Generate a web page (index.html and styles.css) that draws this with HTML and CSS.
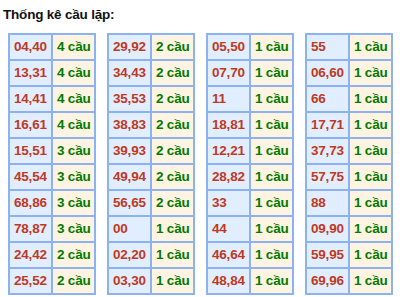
FILE: index.html
```html
<!DOCTYPE html>
<html lang="vi">
<head>
<meta charset="utf-8">
<title>Thống kê cầu lặp</title>
<link rel="stylesheet" href="styles.css">
</head>
<body>
<div class="page">
  <h2 class="title">Thống kê cầu lặp:</h2>
  <div class="tables">
    <table class="cau">
      <tr><td class="num">04,40</td><td class="cnt">4 cầu</td></tr>
      <tr><td class="num">13,31</td><td class="cnt">4 cầu</td></tr>
      <tr><td class="num">14,41</td><td class="cnt">4 cầu</td></tr>
      <tr><td class="num">16,61</td><td class="cnt">4 cầu</td></tr>
      <tr><td class="num">15,51</td><td class="cnt">3 cầu</td></tr>
      <tr><td class="num">45,54</td><td class="cnt">3 cầu</td></tr>
      <tr><td class="num">68,86</td><td class="cnt">3 cầu</td></tr>
      <tr><td class="num">78,87</td><td class="cnt">3 cầu</td></tr>
      <tr><td class="num">24,42</td><td class="cnt">2 cầu</td></tr>
      <tr><td class="num">25,52</td><td class="cnt">2 cầu</td></tr>
    </table>
    <table class="cau">
      <tr><td class="num">29,92</td><td class="cnt">2 cầu</td></tr>
      <tr><td class="num">34,43</td><td class="cnt">2 cầu</td></tr>
      <tr><td class="num">35,53</td><td class="cnt">2 cầu</td></tr>
      <tr><td class="num">38,83</td><td class="cnt">2 cầu</td></tr>
      <tr><td class="num">39,93</td><td class="cnt">2 cầu</td></tr>
      <tr><td class="num">49,94</td><td class="cnt">2 cầu</td></tr>
      <tr><td class="num">56,65</td><td class="cnt">2 cầu</td></tr>
      <tr><td class="num">00</td><td class="cnt">1 cầu</td></tr>
      <tr><td class="num">02,20</td><td class="cnt">1 cầu</td></tr>
      <tr><td class="num">03,30</td><td class="cnt">1 cầu</td></tr>
    </table>
    <table class="cau">
      <tr><td class="num">05,50</td><td class="cnt">1 cầu</td></tr>
      <tr><td class="num">07,70</td><td class="cnt">1 cầu</td></tr>
      <tr><td class="num">11</td><td class="cnt">1 cầu</td></tr>
      <tr><td class="num">18,81</td><td class="cnt">1 cầu</td></tr>
      <tr><td class="num">12,21</td><td class="cnt">1 cầu</td></tr>
      <tr><td class="num">28,82</td><td class="cnt">1 cầu</td></tr>
      <tr><td class="num">33</td><td class="cnt">1 cầu</td></tr>
      <tr><td class="num">44</td><td class="cnt">1 cầu</td></tr>
      <tr><td class="num">46,64</td><td class="cnt">1 cầu</td></tr>
      <tr><td class="num">48,84</td><td class="cnt">1 cầu</td></tr>
    </table>
    <table class="cau">
      <tr><td class="num">55</td><td class="cnt">1 cầu</td></tr>
      <tr><td class="num">06,60</td><td class="cnt">1 cầu</td></tr>
      <tr><td class="num">66</td><td class="cnt">1 cầu</td></tr>
      <tr><td class="num">17,71</td><td class="cnt">1 cầu</td></tr>
      <tr><td class="num">37,73</td><td class="cnt">1 cầu</td></tr>
      <tr><td class="num">57,75</td><td class="cnt">1 cầu</td></tr>
      <tr><td class="num">88</td><td class="cnt">1 cầu</td></tr>
      <tr><td class="num">09,90</td><td class="cnt">1 cầu</td></tr>
      <tr><td class="num">59,95</td><td class="cnt">1 cầu</td></tr>
      <tr><td class="num">69,96</td><td class="cnt">1 cầu</td></tr>
    </table>
  </div>
</div>
</body>
</html>
```

FILE: styles.css
```css
html, body {
  margin: 0;
  padding: 0;
  background: #ffffff;
}

.page {
  padding: 6px 0 0 3px;
  font-family: "Liberation Sans", Arial, sans-serif;
}

.title {
  margin: 0;
  font-size: 13.5px;
  line-height: 17px;
  letter-spacing: -0.2px;
  font-weight: bold;
  color: #111111;
}

.tables {
  display: flex;
  gap: 11px;
  margin-top: 10px;
  padding-left: 5px;
}

.cau {
  width: 88px;
  table-layout: fixed;
  border: 1px solid #8db2f2;
  border-spacing: 0;
  border-collapse: separate;
  font-size: 13.5px;
  letter-spacing: -0.2px;
  font-weight: bold;
}

.cau td {
  border: 1px solid #8db2f2;
  height: 24px;
  padding: 0 0 0 4px;
  text-align: left;
  vertical-align: middle;
  white-space: nowrap;
  overflow: hidden;
  line-height: 16px;
}

.cau td.num {
  background: #e1eeff;
  color: #c0391f;
}

.cau td.cnt {
  background: #fff4e2;
  color: #007a00;
}
```
